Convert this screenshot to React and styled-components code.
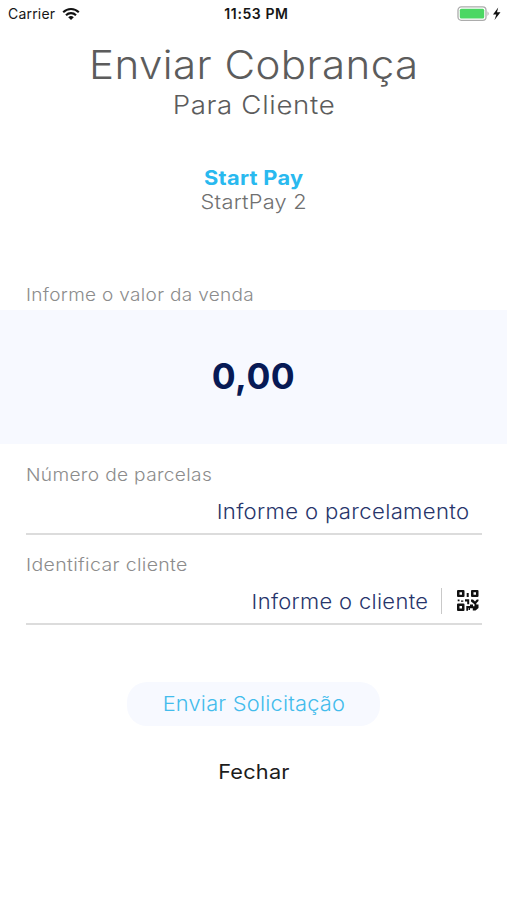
import React from "react";
import styled, { createGlobalStyle } from "styled-components";

const GlobalStyle = createGlobalStyle`
  * { box-sizing: border-box; }
  body { margin: 0; background: #fff; }
  button { border: 0; padding: 0; background: none; font: inherit; }
`;

const Screen = styled.main`
  display: flex;
  flex-direction: column;
  width: 507px;
  height: 900px;
  overflow: hidden;
  background: #fff;
  font-family: Inter, "Open Sans", sans-serif;
  white-space: nowrap;
`;

const StatusBar = styled.div`
  display: grid;
  grid-template-columns: 1fr auto 1fr;
  align-items: center;
  height: 28px;
  padding: 0 5px 0 8px;
  color: #161616;
  font-size: 14px;
  line-height: 28px;
`;

const Carrier = styled.div`
  display: flex;
  align-items: center;
  gap: 7px;
  letter-spacing: 0.2px;
`;

const Clock = styled.div`
  font-weight: 600;
  letter-spacing: 0.6px;
  padding-left: 3px;
`;

const Power = styled.div`
  display: flex;
  justify-content: flex-end;
`;

const Header = styled.header`
  display: flex;
  flex-direction: column;
  align-items: center;
  padding-top: 12px;
  color: #5c5c5c;
`;

const Title = styled.h1`
  margin: 0;
  font-size: 39px;
  font-weight: 300;
  line-height: 49px;
  letter-spacing: 0.4px;
  transform: scaleX(1.078);
`;

const Subtitle = styled.h2`
  margin: 0;
  padding-top: 1px;
  font-size: 25.5px;
  font-weight: 300;
  line-height: 30px;
  letter-spacing: 0.6px;
  transform: scaleX(1.085);
`;

const Merchant = styled.section`
  display: flex;
  flex-direction: column;
  align-items: center;
  margin-top: 46px;
  font-size: 20px;
  line-height: 24px;
`;

const Brand = styled.strong`
  color: #29b9ef;
  font-weight: 700;
  letter-spacing: 0.3px;
  transform: scaleX(1.09);
`;

const Store = styled.span`
  color: #707070;
  font-weight: 350;
  letter-spacing: 0.2px;
  transform: scaleX(1.09);
`;

const Label = styled.label`
  display: block;
  color: #8c8c8c;
  font-size: 17.5px;
  font-weight: 350;
  line-height: 24px;
  letter-spacing: 0.3px;
  transform: scaleX(${(p) => p.$stretch});
  transform-origin: 0 50%;
`;

const Sale = styled.section`
  margin-top: 69px;
`;

const SaleHeading = styled.div`
  height: 27px;
  padding-left: 26px;
`;

const Amount = styled.div`
  display: flex;
  align-items: center;
  justify-content: center;
  height: 134px;
  padding-bottom: 2px;
  background: #f7f9ff;
  color: #071a55;
  font-size: 35.5px;
  font-weight: 700;
  letter-spacing: 0.5px;
`;

const Fields = styled.section`
  display: flex;
  flex-direction: column;
  gap: 18px;
  padding: 19px 25px 0 26px;
`;

const Field = styled.div`
  height: 72px;
  border-bottom: 2px solid #dcdcdc;
`;

const Entry = styled.div`
  display: flex;
  align-items: center;
  justify-content: flex-end;
  height: 46px;
  padding: 2px ${(p) => p.$inset}px 0 0;
`;

const Value = styled.span`
  padding-top: 1px;
  color: #27356b;
  font-size: 20.3px;
  font-weight: 350;
  line-height: 26px;
  letter-spacing: 0.3px;
  transform: scaleX(${(p) => p.$stretch});
  transform-origin: 100% 50%;
`;

const Divider = styled.i`
  width: 1px;
  height: 26px;
  margin: 0 15px 0 13px;
  background: #c9c9c9;
`;

const Actions = styled.section`
  display: flex;
  flex-direction: column;
  align-items: center;
  margin-top: 57px;
`;

const SubmitButton = styled.button`
  width: 253px;
  height: 44px;
  padding-bottom: 2px;
  border-radius: 20px;
  background: #f7f9ff;
  color: #43bcec;
  font-size: 20.3px;
  font-weight: 350;
`;

const SubmitText = styled.span`
  display: inline-block;
  letter-spacing: 0.2px;
  transform: scaleX(1.075);
`;

const CloseButton = styled.button`
  margin-top: 33px;
  height: 26px;
  color: #1c1c1c;
  font-size: 20px;
  font-weight: 370;
  line-height: 26px;
  letter-spacing: 0.2px;
  transform: scaleX(1.085);
`;

const WifiIcon = () => (
  <svg width="18" height="13" viewBox="0 0 18 13" fill="none" stroke="#111" strokeWidth="2.1">
    <path d="M1.2 4.3a11 11 0 0 1 15.6 0M4 7.2a7.1 7.1 0 0 1 10 0" />
    <path d="M9 12.1 6.2 9.3a4 4 0 0 1 5.6 0Z" fill="#111" stroke="none" />
  </svg>
);

const BatteryIcon = () => (
  <svg width="45" height="16" viewBox="0 0 45 16">
    <rect x="1" y="0.9" width="28" height="13.4" rx="3.3" fill="#fff" stroke="#acacac" strokeWidth="1.3" />
    <rect x="2.8" y="2.7" width="24.4" height="9.8" rx="1.6" fill="#4bd763" />
    <path d="M30.5 5.2q2.4 2.4 0 4.8Z" fill="#acacac" />
    <path d="M41.200 1.600 36 8.600h3.300L37.500 13.900l6-7.600h-3.500Z" fill="#111" />
  </svg>
);

const QrIcon = () => (
  <svg width="22" height="22" viewBox="0 0 22 22" fill="#111">
    <path
      fillRule="evenodd"
      d="M1 0h5.500q1 0 1 1V6q0 1-1 1H1Q0 7 0 6V1q0-1 1-1Zm1.500 2.300v2.400H5V2.300ZM15 0h5.500q1 0 1 1V6q0 1-1 1H15q-1 0-1-1V1q0-1 1-1Zm1.500 2.300v2.400H19V2.300ZM1 13.500h5.500q1 0 1 1v5.500q0 1-1 1H1q-1 0-1-1v-5.500q0-1 1-1Zm1.500 2.500v2.500H5V16Z"
    />
    <path d="M9.700 3h2v4h-2ZM.7 9.500h1.800v1.800H.7ZM4 10.500h2.300v1.300H4ZM8 9.300h4.200v5h-2v-2.700H8ZM14 9.500h2l2 2 1.800-2h1.700v1.600l-2.200 2.200v1.300h2.200v3.500L18.500 20.500h-2.700v-2.200H13v1.800h-1.500V18H11v2.800H9.300v-4.800H13v-1.500h3v1.800h1.500v-2L14 11.500Z" />
  </svg>
);

export default function App() {
  return (
    <>
      <GlobalStyle />
      <Screen>
        <StatusBar>
          <Carrier>
            <span>Carrier</span>
            <WifiIcon />
          </Carrier>
          <Clock>11:53 PM</Clock>
          <Power>
            <BatteryIcon />
          </Power>
        </StatusBar>
        <Header>
          <Title>Enviar Cobrança</Title>
          <Subtitle>Para Cliente</Subtitle>
        </Header>
        <Merchant>
          <Brand>Start Pay</Brand>
          <Store>StartPay 2</Store>
        </Merchant>
        <Sale>
          <SaleHeading>
            <Label $stretch={1.086}>Informe o valor da venda</Label>
          </SaleHeading>
          <Amount>0,00</Amount>
        </Sale>
        <Fields>
          <Field>
            <Label $stretch={1.093}>Número de parcelas</Label>
            <Entry $inset={12}>
              <Value $stretch={1.092}>Informe o parcelamento</Value>
            </Entry>
          </Field>
          <Field>
            <Label $stretch={1.115}>Identificar cliente</Label>
            <Entry $inset={3}>
              <Value $stretch={1.082}>Informe o cliente</Value>
              <Divider />
              <QrIcon />
            </Entry>
          </Field>
        </Fields>
        <Actions>
          <SubmitButton>
            <SubmitText>Enviar Solicitação</SubmitText>
          </SubmitButton>
          <CloseButton>Fechar</CloseButton>
        </Actions>
      </Screen>
    </>
  );
}
